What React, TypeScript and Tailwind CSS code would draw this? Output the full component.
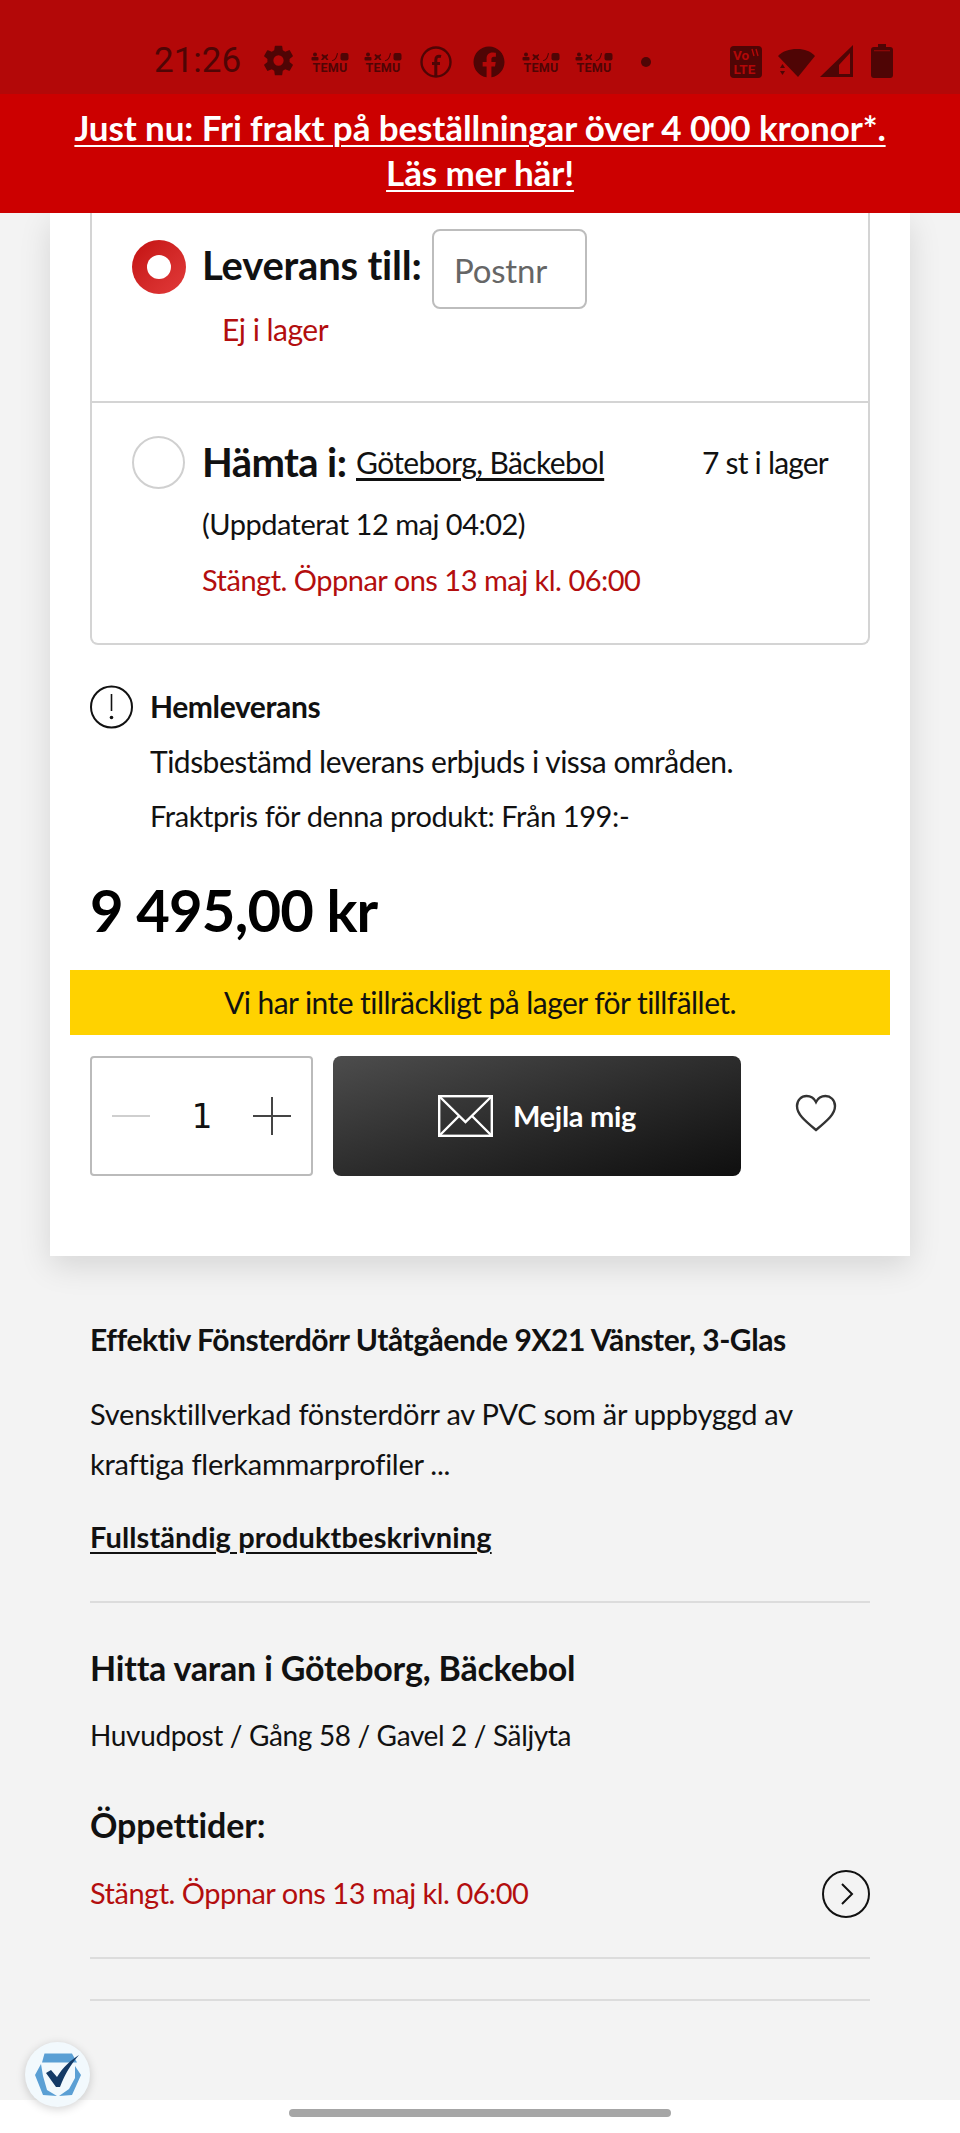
import React from "react";
import { FaFacebook } from "react-icons/fa";
import { IoSettingsSharp } from "react-icons/io5";

function Temu() {
  return (
    <div className="flex w-[38px] flex-col items-center">
      <svg width="38" height="9" viewBox="0 0 38 9" fill="#4f0505">
        <circle cx="4" cy="2.5" r="2" />
        <rect x="0.5" y="5" width="7" height="3.5" rx="1" />
        <path d="M11 2l3 1.5 3-1.5v1.5L15.5 5l2 3h-2l-1.5-2-2 2H10l2-3-1.5-1.5z" />
        <path d="M21 8c2.5 0 4-2.5 5-7l1 .3c-1 5-3 7.7-6 7.7z" />
        <rect x="29.5" y="1" width="8" height="7.5" rx="2" />
      </svg>
      <span className="mt-[1px] font-['Roboto',sans-serif] text-[12.5px] leading-[11px] font-bold tracking-[0.2px] text-[#4f0505]">TEMU</span>
    </div>
  );
}

function StatusBar() {
  return (
    <div className="flex h-[94px] shrink-0 items-start bg-[#b30808] pt-[43px] pl-[154px] text-[#4f0505]">
      <span className="h-[34px] w-[87px] font-['Roboto',sans-serif] text-[35px] leading-[36px]">21:26</span>
      <IoSettingsSharp className="mt-[1px] ml-[21px] h-[33px] w-[33px]" />
      <div className="mt-[9px] ml-[16px]"><Temu /></div>
      <div className="mt-[9px] ml-[15px]"><Temu /></div>
      <svg className="mt-[3px] ml-[18px]" width="32" height="32" viewBox="0 0 32 32" fill="none" stroke="#4f0505">
        <circle cx="16" cy="16" r="14.5" strokeWidth="2.4" />
        <path d="M21 10.5c-3.5-1-5.2.5-5.2 3.5V30M12 17.5h8" strokeWidth="3" />
      </svg>
      <FaFacebook className="mt-[3px] ml-[21px] h-[32px] w-[32px]" />
      <div className="mt-[9px] ml-[17px]"><Temu /></div>
      <div className="mt-[9px] ml-[15px]"><Temu /></div>
      <div className="mt-[14px] ml-[28px] h-[10px] w-[10px] rounded-full bg-[#4f0505]" />
      <svg className="mt-[3px] ml-[79px]" width="32" height="32" viewBox="0 0 32 32">
        <rect width="32" height="32" rx="4" fill="#4f0505" />
        <text x="3" y="14" fontFamily="Roboto, sans-serif" fontWeight="700" fontSize="13.5" fill="#b30808">Vo</text>
        <path d="M22 3l2 7M26 3l2 7" stroke="#b30808" strokeWidth="1.4" />
        <text x="3.5" y="28" fontFamily="Roboto, sans-serif" fontWeight="700" fontSize="13.5" fill="#b30808">LTE</text>
      </svg>
      <svg className="mt-[3px] ml-[15px]" width="38" height="32" viewBox="0 0 38 32" fill="#4f0505">
        <path d="M1 10C6 5 12 3 20 3s13 2 18 7L21 31z" />
        <path d="M3 22l2.500-4 2.500 4zM3 25l2.500 4 2.500-4z" />
      </svg>
      <svg className="mt-[1px] ml-[5px]" width="33" height="34" viewBox="0 0 33 34" fill="#4f0505">
        <path d="M33 1v32H0zM30 9L19 21v9h11z" fillRule="evenodd" />
      </svg>
      <svg className="mt-[1px] ml-[18px]" width="22" height="34" viewBox="0 0 22 34" fill="#4f0505">
        <path d="M7 0h8v3h4a3 3 0 0 1 3 3v25a3 3 0 0 1-3 3H3a3 3 0 0 1-3-3V6a3 3 0 0 1 3-3h4z" />
        <rect x="3" y="6" width="16" height="1.300" fill="#8a0707" />
      </svg>
    </div>
  );
}

export default function App() {
  return (
    <div className="flex h-[2133px] w-[960px] flex-col overflow-hidden bg-[#f3f3f3] font-['Lato',sans-serif] text-[#111]">
      <StatusBar />
      <div className="z-10 h-[119px] shrink-0 bg-[#cc0000] pt-[11px] text-center text-[35px] leading-[45px] font-bold tracking-[-0.1px] text-white underline decoration-2 underline-offset-4">
        <p>Just nu: Fri frakt på beställningar över 4 000 kronor*.</p>
        <p>Läs mer här!</p>
      </div>

      <div className="mx-[50px] h-[1043px] shrink-0 bg-white px-[40px] shadow-[0_10px_30px_rgba(0,0,0,0.12)]">
        <div className="rounded-b-[8px] border-x-2 border-b-2 border-[#d4d4d4]">
          <div className="h-[190px] border-b-2 border-[#d4d4d4] pl-[40px]">
            <div className="flex items-start pt-[16px]">
              <div className="mt-[11px] h-[54px] w-[54px] rounded-full bg-gradient-to-br from-[#c30f0f] to-[#e23a3a] p-[15px]">
                <div className="h-full w-full rounded-full bg-white" />
              </div>
              <span className="mt-[9px] ml-[16px] w-[230px] text-[40px] leading-[54px] font-bold tracking-[-0.2px]">Leverans till:</span>
              <div className="flex h-[80px] w-[155px] items-center rounded-[8px] border-2 border-[#bdbdbd] pt-[3px] pl-[20px] text-[33px] tracking-[-0.2px] text-[#666]">Postnr</div>
            </div>
            <p className="pl-[90px] text-[30px] leading-[40px] tracking-[-0.5px] text-[#b30e0e]">Ej i lager</p>
          </div>
          <div className="h-[240px] pt-[33px] pl-[40px]">
            <div className="flex items-center pr-[40px]">
              <div className="h-[53px] w-[53px] rounded-full border-2 border-[#d0d0d0]" />
              <span className="ml-[17px] w-[154px] text-[40px] leading-[53px] font-bold tracking-[-0.6px]">Hämta i:</span>
              <span className="text-[30px] tracking-[-0.6px] underline underline-offset-4">Göteborg, Bäckebol</span>
              <span className="ml-auto text-[30px] tracking-[-0.8px]">7 st i lager</span>
            </div>
            <p className="mt-[15px] ml-[70px] text-[29px] leading-[40px] tracking-[-0.5px]">(Uppdaterat 12 maj 04:02)</p>
            <p className="mt-[16px] ml-[70px] text-[29px] leading-[40px] tracking-[-0.5px] text-[#b30e0e]">Stängt. Öppnar ons 13 maj kl. 06:00</p>
          </div>
        </div>

        <div className="mt-[40px] flex gap-[17px]">
          <svg width="43" height="44" viewBox="0 0 43 44" fill="none" stroke="#111" strokeWidth="2" className="shrink-0">
            <circle cx="21.500" cy="22" r="20.500" />
            <path d="M21.500 9v17" strokeWidth="1.600" />
            <circle cx="21.500" cy="32.500" r="1.800" fill="#111" stroke="none" />
          </svg>
          <div className="flex flex-col gap-[15px] pt-[1px]">
            <p className="text-[30px] leading-[40px] font-bold tracking-[-0.4px]">Hemleverans</p>
            <p className="text-[30px] leading-[40px] tracking-[-0.5px]">Tidsbestämd leverans erbjuds i vissa områden.</p>
            <p className="text-[29px] leading-[40px] tracking-[-0.4px]">Fraktpris för denna produkt: Från 199:-</p>
          </div>
        </div>

        <p className="mt-[39px] text-[58px] leading-[70px] font-bold tracking-[-0.8px] text-black">9 495,00 kr</p>

        <div className="mx-[-20px] mt-[25px] flex h-[65px] items-center justify-center bg-[#ffd200] text-[30px] tracking-[-0.55px]">
          Vi har inte tillräckligt på lager för tillfället.
        </div>

        <div className="mt-[21px] flex h-[120px] items-stretch">
          <div className="flex w-[223px] items-center justify-between rounded-[4px] border-2 border-[#bbb] px-[20px]">
            <div className="h-[2px] w-[38px] bg-[#cfcfcf]" />
            <span className="font-['DejaVu_Sans_Mono',monospace] text-[34px]">1</span>
            <svg width="38" height="38" viewBox="0 0 38 38" stroke="#444" strokeWidth="2">
              <path d="M0 19h38M19 0v38" />
            </svg>
          </div>
          <div className="ml-[20px] flex w-[408px] items-center justify-center gap-[20px] rounded-[8px] bg-gradient-to-br from-[#4d4d4d] to-[#0f0f0f] text-white">
            <svg width="55" height="42" viewBox="0 0 55 42" fill="none" stroke="#fff" strokeWidth="2.400">
              <rect x="1.200" y="1.200" width="52.600" height="39.600" />
              <path d="M2 2l25.500 25L53 2M2 40l19-19M53 40L34 21" />
            </svg>
            <span className="text-[29px] font-bold tracking-[-0.3px]">Mejla mig</span>
          </div>
          <div className="flex flex-1 items-start justify-center pt-[38px] pl-[20px]">
            <svg width="42" height="38" viewBox="0 0 42 38" fill="none" stroke="#333" strokeWidth="2.400">
              <path d="M21 36C9 26 2 20 2 12 2 6 6.500 2 11.500 2 15.500 2 19 4 21 8c2-4 5.500-6 9.500-6C35.500 2 40 6 40 12c0 8-7 14-19 24z" />
            </svg>
          </div>
        </div>
      </div>

      <div className="px-[90px]">
        <h2 className="mt-[63px] text-[30px] leading-[40px] font-bold tracking-[-0.45px]">Effektiv Fönsterdörr Utåtgående 9X21 Vänster, 3-Glas</h2>
        <p className="mt-[30px] text-[29px] leading-[50px] tracking-[-0.25px]">
          Svensktillverkad fönsterdörr av PVC som är uppbyggd av
          <br />
          kraftiga flerkammarprofiler ...
        </p>
        <p className="mt-[28px] text-[29px] leading-[40px] font-bold tracking-[0.1px] underline underline-offset-4">Fullständig produktbeskrivning</p>
        <div className="mt-[44px] h-[2px] bg-[#dcdcdc]" />
        <h2 className="mt-[43px] text-[34px] leading-[44px] font-bold tracking-[-0.2px]">Hitta varan i Göteborg, Bäckebol</h2>
        <p className="mt-[25px] text-[28px] leading-[40px] tracking-[-0.35px]">Huvudpost / Gång 58 / Gavel 2 / Säljyta</p>
        <h3 className="mt-[48px] text-[34px] leading-[44px] font-bold tracking-[-0.1px]">Öppettider:</h3>
        <div className="mt-[22px] flex h-[48px] items-center justify-between">
          <span className="text-[29px] tracking-[-0.5px] text-[#b30e0e]">Stängt. Öppnar ons 13 maj kl. 06:00</span>
          <svg className="mt-[2px]" width="48" height="48" viewBox="0 0 48 48" fill="none" stroke="#111" strokeWidth="2">
            <circle cx="24" cy="24" r="23" />
            <path d="M20 14l10 10-10 10" />
          </svg>
        </div>
        <div className="mt-[40px] h-[2px] bg-[#dcdcdc]" />
        <div className="mt-[40px] h-[2px] bg-[#dcdcdc]" />
      </div>

      <div className="relative mt-auto flex h-[33px] shrink-0 justify-center bg-white pt-[9px]">
        <div className="h-[8px] w-[382px] rounded-full bg-[#a6a6a6]" />
        <div className="absolute top-[-58px] left-[25px] flex h-[65px] w-[65px] items-center justify-center rounded-full bg-[#f2f9fd] shadow-[0_2px_10px_rgba(0,0,0,0.18)]">
          <svg width="50" height="46" viewBox="0 0 50 46">
            <path d="M11.500 1.500H39l5 9H9z" fill="#5a9fd4" />
            <path d="M8 12L2 23l8 20 14 1-10-6-4-14z" fill="#5a9fd4" />
            <path d="M42 14l6 9-9 20-13 1 10-7 6-11z" fill="#5a9fd4" />
            <path d="M13 21l5-3 6 7C30 15 38 8 46 3 38 12 32 22 27 35h-4z" fill="#143a66" />
          </svg>
        </div>
      </div>
    </div>
  );
}
